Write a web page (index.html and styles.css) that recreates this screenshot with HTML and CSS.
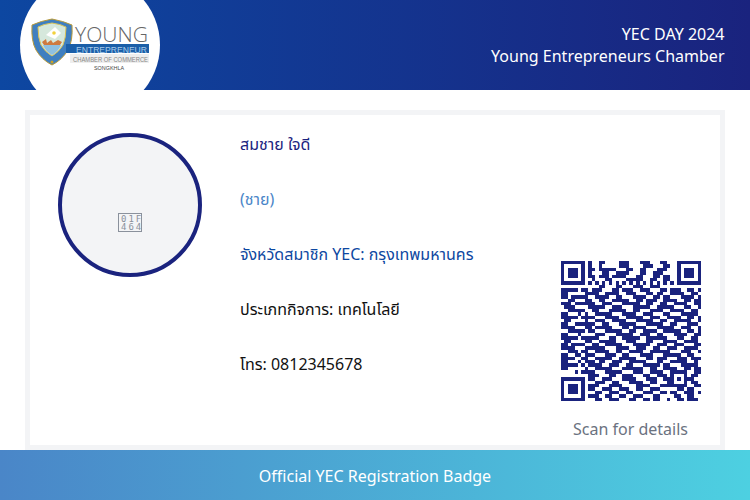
FILE: index.html
```html
<html>
  <head>
    <title>YEC DAY 2024</title>
    <meta charset="utf-8">
    <link rel="stylesheet" href="styles.css">
  </head>
  <body>
    <div class="header">
      <div class="logo">
        <svg width="140" height="140" viewBox="0 0 140 140">
          <g transform="translate(12 44)">
            <path d="M20 0 Q9 2 0 6 Q-1 22 4 31 Q10 41 20 46 Q30 41 36 31 Q41 22 40 6 Q31 2 20 0 Z" fill="#3f7fc0" stroke="#b89a3a" stroke-width="1"/>
            <path d="M20 4 Q12 5 6 8 Q6 19 9 26 Q13 33 20 37 Q27 33 31 26 Q34 19 34 8 Q28 5 20 4 Z" fill="#d6e8dc" stroke="#d8c35a" stroke-width="1"/>
            <path d="M14 16 L23 8 L29 14 L23 20 Z" fill="#fff"/>
            <circle cx="22" cy="14" r="1.8" fill="#f2d13c"/>
            <path d="M10 23 L14 20 L15 24 L19 21 L21 24 L26 21 L30 23 L28 26 L12 26 Z" fill="#cf7a3f"/>
            <path d="M11 26 L29 26 Q26 33 20 36 Q14 33 11 26 Z" fill="#8fc0e0"/>
            <circle cx="20" cy="43" r="1.5" fill="#c9a227"/>
          </g>
          <text class="logo-young" x="55" y="67" textLength="73" lengthAdjust="spacingAndGlyphs">YOUNG</text>
          <rect x="46" y="69" width="83" height="9" fill="#1b5fa8"/>
          <text class="logo-ent" x="56" y="77.5" textLength="71" lengthAdjust="spacingAndGlyphs">ENTREPRENEUR</text>
          <rect x="50" y="79" width="79" height="9" fill="#eeeeee"/>
          <text class="logo-cham" x="53" y="87" textLength="75" lengthAdjust="spacingAndGlyphs">CHAMBER OF COMMERCE</text>
          <text class="logo-song" x="74" y="94.5" textLength="30" lengthAdjust="spacingAndGlyphs">SONGKHLA</text>
        </svg>
      </div>
      <div class="event">
        <div>YEC DAY 2024</div>
        <div>Young Entrepreneurs Chamber</div>
      </div>
    </div>
    <div class="main">
      <div class="card">
        <div class="avatar-col">
          <div class="avatar">
            <div class="tofu">01F<br>464</div>
          </div>
        </div>
        <div class="details">
          <div class="name">สมชาย ใจดี</div>
          <div class="gender">(ชาย)</div>
          <div class="province">จังหวัดสมาชิก YEC: กรุงเทพมหานคร</div>
          <div>ประเภทกิจการ: เทคโนโลยี</div>
          <div>โทร: 0812345678</div>
        </div>
        <div class="qr-col">
          <svg id="qr" class="qr" width="140" height="140" viewBox="0 0 41 41" shape-rendering="crispEdges"></svg>
          <div class="scan">Scan for details</div>
        </div>
      </div>
    </div>
    <div class="footer">Official YEC Registration Badge</div>
    <script type="text/javascript" src="qr.js"></script>
  </body>
</html>
```
FILE: styles.css
```css
body {
	margin: 0;
	width: 750px;
	height: 500px;
	overflow: hidden;
	display: flex;
	flex-direction: column;
	font-family: "Noto Sans", "Noto Sans Thai", sans-serif;
	font-size: 16px;
	color: #111;
	background: #fff;
}

.header {
	height: 90px;
	flex: none;
	overflow: hidden;
	display: flex;
	justify-content: space-between;
	align-items: center;
	padding: 0 25.5px 0 20px;
	box-sizing: border-box;
	background: linear-gradient(90deg, #0d47a1, #1a237e);
}

.logo {
	width: 140px;
	height: 140px;
	flex: none;
	border-radius: 50%;
	background: #fff;
}

.logo svg {
	display: block;
}

.logo-young {
	font-family: "Open Sans", sans-serif;
	font-weight: 300;
	font-size: 21px;
	fill: #666;
}

.logo-ent {
	font-family: "Liberation Sans", sans-serif;
	font-size: 8.5px;
	fill: #a9cbea;
}

.logo-cham {
	font-family: "Liberation Sans", sans-serif;
	font-size: 6.5px;
	fill: #888;
}

.logo-song {
	font-family: "Liberation Sans", sans-serif;
	font-size: 5.5px;
	fill: #444;
}

.event {
	text-align: right;
	color: #fff;
	line-height: 22px;
}

.main {
	flex: 1;
	padding: 20px 25px 0;
	display: flex;
	min-height: 0;
}

.card {
	flex: 1;
	display: flex;
	border: 5px solid #f3f4f6;
}

.avatar-col {
	width: 210px;
	flex: none;
	padding: 18px 0 0 28px;
	box-sizing: border-box;
}

.avatar {
	width: 144px;
	height: 144px;
	box-sizing: border-box;
	border: 4px solid #1a237e;
	border-radius: 50%;
	background: #f3f4f6;
	display: flex;
	justify-content: center;
	align-items: flex-start;
	padding-top: 76px;
}

/* the missing-glyph box for the person icon */
.tofu {
	width: 24px;
	height: 19px;
	box-sizing: border-box;
	border: 1px solid #8a919c;
	color: #8a919c;
	font-family: "DejaVu Sans Mono", monospace;
	font-size: 9px;
	line-height: 8px;
	letter-spacing: 2px;
	text-align: center;
	padding: 1px 0 0 2px;
}

.details {
	flex: 1;
	padding-top: 18px;
	display: flex;
	flex-direction: column;
	gap: 33px;
	line-height: 22px;
}

.name {
	color: #1a237e;
}

.gender {
	color: #4a86c8;
}

.province {
	color: #0d47a1;
}

.qr-col {
	width: 164px;
	flex: none;
	box-sizing: border-box;
	padding: 146px 15px 0 0;
	text-align: center;
	color: #6b7280;
}

.qr {
	display: block;
	margin: 0 auto 17px;
}

.footer {
	height: 50px;
	flex: none;
	box-sizing: border-box;
	padding-top: 2px;
	display: flex;
	align-items: center;
	justify-content: center;
	color: #fff;
	background: linear-gradient(90deg, #4a86c8, #4dd0e1);
}
```
FILE: qr.js
```js
var rows = [
	"11111110" + "1001100001110001110001100" + "01111111",
	"10000010" + "1001000001110000111000110" + "01000001",
	"10111010" + "1101111100011001100011100" + "01011101",
	"10111010" + "1000110011110001100111000" + "01011101",
	"10111010" + "1101110111100011000110110" + "01011101",
	"10000010" + "0100011000011111001100110" + "01000001",
	"11111110" + "1010101010101010101010101" + "01111111",
	"00000000" + "0001100011000111001110000" + "00000000",
	"11111011011100011011100111000110111001101",
	"11000001111001111001110001101100111100110",
	"11011111001111001100011110011011000111101",
	"00110001100110011111001101110011110011011",
	"11101111110011100011111001100110011110011",
	"01110000111110011100011111001111100011001",
	"00111110011000111110011000111100111100110",
	"11000111001111100011110011100011000111110",
	"11111011110001111001111100111001111001101",
	"01100011001110011110001111100110011111001",
	"11001111110011000111110001111100110001110",
	"11110001101111100011011110001111100111001",
	"00111110110001111100110011110011111001101",
	"11000110001110001111100111001100011110011",
	"11111011111000110011111001111110001100110",
	"01100011100111110001110001100011110011110",
	"11011110011001111100011111001110011100011",
	"11110001111110001111001110011001110011110",
	"00111011001111001100111100111111000111001",
	"11001111110001110011000111100011111001100",
	"11110011001111100111110001101110001110111",
	"11000111110110011100111110001100111110010",
	"11111000111100111001100011111011000111110",
	"11000011001111100011111100110011110011011",
	"00001001110001111100011100111100111110011",
	"00000000" + "111000110011100011001110" + "10001" + "0110",
	"11111110" + "110011100011110001110011" + "10101" + "1100",
	"10000010" + "001110011000111100110001" + "10001" + "0110",
	"10111010" + "111000111100001111000111" + "11111" + "0011",
	"10111010" + "110011100111001100111000" + "00110" + "1100",
	"10111010" + "001100111001100011100110" + "11001" + "1101",
	"10000010" + "111001100110011100011000" + "01100" + "1100",
	"11111110" + "001100111000110011011001" + "00110" + "1110"
];

var d = "";
for (var y = 0; y < rows.length; y++) {
	for (var x = 0; x < rows[y].length; x++) {
		// column 6 between the finders is the timing pattern
		var on = (x == 6 && y > 7 && y < 33) ? y % 2 == 0 : rows[y].charAt(x) == "1";
		if (on) {
			d += "M" + x + " " + y + "h1v1h-1z";
		}
	}
}

var path = document.createElementNS("http://www.w3.org/2000/svg", "path");
path.setAttribute("d", d);
path.setAttribute("fill", "#1a237e");
document.getElementById("qr").appendChild(path);
```
